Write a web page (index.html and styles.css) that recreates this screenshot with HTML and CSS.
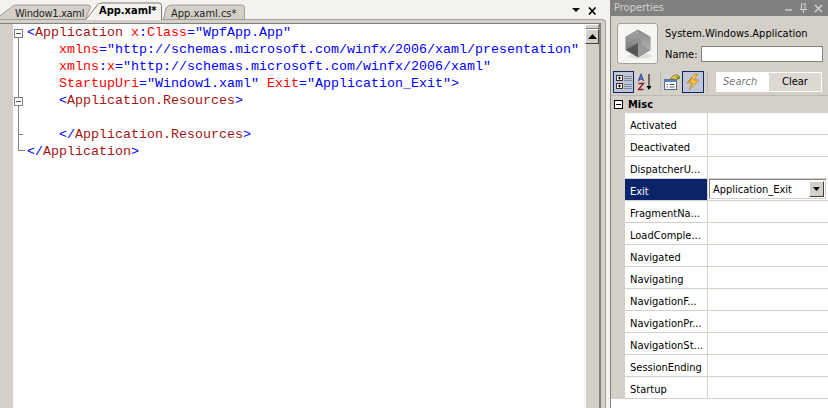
FILE: index.html
```html
<!DOCTYPE html>
<html lang="en">
<head>
<meta charset="utf-8">
<title>App.xaml</title>
<link rel="stylesheet" href="styles.css">
</head>
<body>
<div class="app">
  <section class="doc">
    <div class="tabstrip">
      <div class="tab tab-first">
        <svg class="tab-bg" width="93" height="20" viewBox="0 0 93 20"><path d="M-5 19.500 L13 6 Q14 5 17 5 L88 5 Q90.500 5 90.500 7.500 L85 19.500 Z" fill="#d4d0c8" stroke="#9d9d9a"/></svg>
        <span class="tab-label">Window1.xaml</span>
      </div>
      <div class="tab tab-active">
        <svg class="tab-bg" width="78" height="20" viewBox="0 0 78 20"><path d="M0.500 20 L12.500 5 Q14 3 17 3 L74 3 Q76.500 3 76.500 5.500 V20" fill="#f4f2ee" stroke="#807d76"/></svg>
        <span class="tab-label">App.xaml*</span>
      </div>
      <div class="tab tab-last">
        <svg class="tab-bg" width="84" height="20" viewBox="0 0 84 20"><path d="M0.500 19.500 L3 8 Q5 5 9 5 L79 5 Q81.500 5 81.500 7.500 L81.500 19.500 Z" fill="#d4d0c8" stroke="#9d9d9a"/></svg>
        <span class="tab-label">App.xaml.cs*</span>
      </div>
      <div class="tab-tools">
        <svg width="9" height="5" viewBox="0 0 9 5"><path d="M0 0H8L4 4Z" fill="#000"/></svg>
        <svg width="9" height="8" viewBox="0 0 9 8"><path d="M1 0.500 L7.500 7.500 M7.500 0.500 L1 7.500" stroke="#000" stroke-width="1.600" fill="none"/></svg>
      </div>
    </div>
    <div class="editor-frame">
      <div class="editor">
        <div class="gutter"></div>
        <div class="fold">
          <svg width="14" height="150" viewBox="0 0 14 150">
            <path d="M5.500 14V73 M5.500 82V126.500 H12 M5.500 110.500H10" stroke="#808080" fill="none"/>
            <rect x="1.500" y="5.500" width="8" height="8" fill="#fff" stroke="#808080"/>
            <path d="M3 9.500H8" stroke="#555"/>
            <rect x="1.500" y="73.500" width="8" height="8" fill="#fff" stroke="#808080"/>
            <path d="M3 77.500H8" stroke="#555"/>
          </svg>
        </div>
        <pre class="code"><span class="b">&lt;</span><span class="m">Application</span> <span class="r">x</span><span class="b">:</span><span class="r">Class</span><span class="b">="WpfApp.App"</span>
    <span class="r">xmlns</span><span class="b">="http://schemas.microsoft.com/winfx/2006/xaml/presentation"</span>
    <span class="r">xmlns</span><span class="b">:</span><span class="r">x</span><span class="b">="http://schemas.microsoft.com/winfx/2006/xaml"</span>
    <span class="r">StartupUri</span><span class="b">="Window1.xaml"</span> <span class="r">Exit</span><span class="b">="Application_Exit"&gt;</span>
    <span class="b">&lt;</span><span class="m">Application.Resources</span><span class="b">&gt;</span>

    <span class="b">&lt;/</span><span class="m">Application.Resources</span><span class="b">&gt;</span>
<span class="b">&lt;/</span><span class="m">Application</span><span class="b">&gt;</span></pre>
        <div class="scrollbar">
          <div class="split"></div>
          <div class="sb-btn"><svg width="9" height="5" viewBox="0 0 9 5"><path d="M4.500 0L9 5H0Z" fill="#000"/></svg></div>
          <div class="sb-track"></div>
        </div>
      </div>
    </div>
  </section>
  <aside class="props">
    <header class="props-title">
      <span>Properties</span>
      <span class="title-tools">
        <svg width="9" height="9" viewBox="0 0 9 9"><path d="M1 6H8" stroke="#d4d0c8" stroke-width="1.400"/></svg>
        <svg width="9" height="11" viewBox="0 0 9 11"><path d="M2.500 1V6 M6 1V6 M1 6.500H8 M4.500 7V10 M2 1H7" stroke="#d4d0c8" fill="none"/></svg>
        <svg width="9" height="9" viewBox="0 0 9 9"><path d="M1 1L8 8M8 1L1 8" stroke="#d4d0c8" stroke-width="1.500"/></svg>
      </span>
    </header>
    <div class="object">
      <div class="object-icon">
        <svg width="30" height="32" viewBox="0 0 30 32">
          <defs>
            <linearGradient id="cubeTop" x1="0" y1="0" x2="0" y2="1"><stop offset="0" stop-color="#a8a8a8"/><stop offset="1" stop-color="#6a6a6a"/></linearGradient>
            <linearGradient id="cubeSide" x1="0" y1="0" x2="0" y2="1"><stop offset="0" stop-color="#8c8c8c"/><stop offset="1" stop-color="#b0b0b0"/></linearGradient>
          </defs>
          <ellipse cx="17" cy="28" rx="12" ry="2.500" fill="#dedede"/>
          <path d="M15 2L27 9V22L15 29L3 22V9Z" fill="url(#cubeTop)" stroke="#8a8a8a" stroke-linejoin="round"/>
          <path d="M15 2L27 9V22L18 17Z" fill="url(#cubeSide)"/>
          <path d="M3 22L15 15L15 29Z" fill="#555"/>
          <path d="M15 15L27 22L15 29Z" fill="#9a9a9a"/>
        </svg>
      </div>
      <div class="object-info">
        <div class="object-type">System.Windows.Application</div>
        <label class="name-row"><span>Name:</span><input class="name-input" type="text"></label>
      </div>
    </div>
    <div class="toolbar">
      <button class="tool on"><svg width="18" height="18" viewBox="0 0 18 18"><rect x="1.500" y="2.500" width="6" height="5" fill="#fff" stroke="#333"/><path d="M3 5H6M4.500 3.500V6.500" stroke="#000"/><rect x="1.500" y="10.500" width="6" height="5" fill="#fff" stroke="#333"/><path d="M3 13H6M4.500 11.500V14.500" stroke="#000"/><path d="M9 3.500H17M9 5.500H17M9 7.500H17M9 11.500H17M9 13.500H17M9 15.500H17" stroke="#7a8aa0"/></svg></button>
      <button class="tool tool-az"><svg width="18" height="18" viewBox="0 0 18 18"><path d="M1.500 8L4 1.500L6.500 8M2.500 6H5.500" stroke="#2c4fa8" stroke-width="1.300" fill="none"/><path d="M1.500 10.500H6.500L1.500 16.500H6.500" stroke="#8a2030" stroke-width="1.400" fill="none"/><path d="M12 1V14" stroke="#000"/><path d="M9.500 13H14.500L12 17Z" fill="#000"/></svg></button>
      <span class="tool-sep sep-a"></span>
      <button class="tool tool-pages"><svg width="18" height="18" viewBox="0 0 18 18"><rect x="1.500" y="6.500" width="12" height="10" fill="#fff" stroke="#4a6a9a"/><path d="M1.500 6.500H13.500V9H1.500Z" fill="#5a80c0"/><path d="M3.500 11.500H5M6.500 11.500H11.500M3.500 14H5M6.500 14H11.500" stroke="#556"/><path d="M7 6L11 2H15L17 4L14 7L11 6Z" fill="#e0c050" stroke="#8a7020" stroke-width=".7"/><path d="M13 3.500H17V6H14Z" fill="#6a9a30"/></svg></button>
      <button class="tool on tool-events"><svg width="18" height="18" viewBox="0 0 18 18"><path d="M11 1L3 10H8L5 17L15 7H10L14 1Z" fill="#f0c040" stroke="#b08030" stroke-width=".7"/><path d="M8 4L5 9" stroke="#c06030"/></svg></button>
      <span class="tool-sep sep-b"></span>
      <div class="search">
        <span class="search-box">Search</span>
        <span class="search-clear">Clear</span>
      </div>
    </div>
    <div class="category">
      <svg width="11" height="11" viewBox="0 0 11 11"><rect x="1.500" y="1.500" width="8" height="8" fill="#fff" stroke="#000"/><path d="M3 5.500H8" stroke="#000"/></svg>
      <b>Misc</b>
    </div>
    <div class="grid">
      <div class="row"><div class="cell-name">Activated</div><div class="cell-val"></div></div>
      <div class="row"><div class="cell-name">Deactivated</div><div class="cell-val"></div></div>
      <div class="row"><div class="cell-name">DispatcherU...</div><div class="cell-val"></div></div>
      <div class="row selected"><div class="cell-name">Exit</div><div class="cell-val"><div class="combo"><span>Application_Exit</span><span class="combo-btn"><svg width="7" height="4" viewBox="0 0 7 4"><path d="M0 0H7L3.500 4Z" fill="#000"/></svg></span></div></div></div>
      <div class="row"><div class="cell-name">FragmentNa...</div><div class="cell-val"></div></div>
      <div class="row"><div class="cell-name">LoadComple...</div><div class="cell-val"></div></div>
      <div class="row"><div class="cell-name">Navigated</div><div class="cell-val"></div></div>
      <div class="row"><div class="cell-name">Navigating</div><div class="cell-val"></div></div>
      <div class="row"><div class="cell-name">NavigationF...</div><div class="cell-val"></div></div>
      <div class="row"><div class="cell-name">NavigationPr...</div><div class="cell-val"></div></div>
      <div class="row"><div class="cell-name">NavigationSt...</div><div class="cell-val"></div></div>
      <div class="row"><div class="cell-name">SessionEnding</div><div class="cell-val"></div></div>
      <div class="row"><div class="cell-name">Startup</div><div class="cell-val"></div></div>
    </div>
  </aside>
</div>
</body>
</html>
```
FILE: styles.css
```css
* { box-sizing: border-box; }
html, body { margin: 0; padding: 0; }
body {
  width: 828px;
  height: 408px;
  overflow: hidden;
  background: #d4d0c8;
  font-family: "DejaVu Sans Condensed", "DejaVu Sans", "Liberation Sans", sans-serif;
  font-stretch: condensed;
  font-size: 11px;
  color: #000;
}
.app { display: flex; width: 828px; height: 408px; }

/* document well */
.doc {
  width: 610px;
  flex: none;
  display: flex;
  flex-direction: column;
  background: #f4f2ee;
}
.tabstrip { height: 19px; flex: none; display: flex; align-items: flex-end; position: relative; }
.tab { position: relative; height: 20px; margin-bottom: -1px; flex: none; }
.tab-bg { position: absolute; left: 0; top: 0; }
.tab-label { position: absolute; white-space: nowrap; font-size: 11px; line-height: 16px; color: #222; }
.tab-first { width: 85px; }
.tab-first .tab-label { left: 15px; top: 6px; letter-spacing: -0.3px; }
.tab-active { width: 78px; z-index: 2; }
.tab-active .tab-label { left: 14px; top: 3px; font-weight: 700; color: #000; }
.tab-last { width: 84px; }
.tab-last .tab-label { left: 8px; top: 6px; }
.tab-tools {
  margin-left: auto;
  margin-right: 13px;
  align-self: center;
  display: flex;
  align-items: center;
  gap: 7px;
  padding-top: 2px;
}
.editor-frame {
  flex: 1;
  min-height: 0;
  margin-right: 4px;
  background: #d4d0c8;
  border-top: 1px solid #a5a29b;
  border-right: 1px solid #a5a29b;
  border-top-right-radius: 4px;
  padding-right: 4px;
  padding-top: 3px;
}
.editor {
  height: 100%;
  display: flex;
  background: #fff;
  border-top: 1px solid #808080;
  border-right: 2px solid #808080;
}
.gutter { width: 13px; flex: none; background: #d4d0c8; }
.fold { width: 14px; flex: none; }
.fold svg { display: block; }
.code {
  flex: 1;
  margin: 0;
  font-family: "Liberation Mono", monospace;
  font-size: 13.33px;
  line-height: 17px;
  white-space: pre;
  overflow: hidden;
}
.b { color: #0000ff; }
.m { color: #a31515; }
.r { color: #ff0000; }
.scrollbar { width: 15px; flex: none; display: flex; flex-direction: column; background: #d4d0c8; border-left: 1px solid #f4f2ee; }
.split { height: 5px; border: 1px solid #808080; border-top-color: #fff; border-left-color: #fff; }
.sb-btn { height: 15px; display: flex; align-items: center; justify-content: center; background: #d4d0c8; border: 1px solid; border-color: #fff #404040 #404040 #fff; }
.sb-track { flex: 1; border-left: 1px solid #fff; }

/* properties */
.props {
  width: 218px;
  flex: none;
  display: flex;
  flex-direction: column;
  background: #d4d0c8;
  border-left: 1px solid #808080;
}
.props-title {
  height: 16px;
  flex: none;
  background: #808080;
  color: #d4d0c8;
  font-size: 11px;
  line-height: 16px;
  padding: 0 5px 0 3px;
  display: flex;
  justify-content: space-between;
  align-items: center;
}
.title-tools { display: flex; align-items: center; gap: 6px; }
.object { height: 54px; flex: none; display: flex; padding: 7px 5px 0 6px; gap: 7px; }
.object-icon {
  width: 41px;
  height: 41px;
  flex: none;
  background: #f6f5f2;
  border: 1px solid #a5a29b;
  border-radius: 3px;
  display: flex;
  align-items: center;
  justify-content: center;
}
.object-info { flex: 1; }
.object-type { line-height: 16px; margin-top: 3px; white-space: nowrap; }
.name-row { display: flex; align-items: center; justify-content: space-between; margin-top: 4px; }
.name-input { width: 122px; height: 16px; padding: 0; border: 1px solid #808080; background: #fff; }
.toolbar { height: 26px; flex: none; display: flex; align-items: center; padding-left: 2px; padding-bottom: 2px; border-bottom: 1px solid #bdb9b0; }
.tool {
  width: 21px;
  height: 22px;
  flex: none;
  padding: 0;
  margin: 0;
  background: transparent;
  border: 1px solid transparent;
  display: flex;
  align-items: center;
  justify-content: center;
}
.tool.on { border-color: #0a246a; background: #c2c6d4; }
.tool-az { margin-left: 1px; }
.tool-pages { width: 20px; }
.tool-events { width: 22px; }
.tool-sep { width: 1px; height: 20px; flex: none; background: #bdb9b0; }
.sep-a { margin: 0 1px 0 4px; }
.sep-b { margin: 0 8px 0 3px; }
.search { display: flex; width: 106px; height: 20px; flex: none; background: #fff; align-items: center; padding: 1px; }
.search-box { width: 52px; padding-left: 6px; font-style: italic; color: #777; line-height: 18px; }
.search-clear { flex: 1; height: 18px; background: #ddd9d2; text-align: center; line-height: 18px; }
.category {
  height: 17px;
  flex: none;
  display: flex;
  align-items: center;
  gap: 4px;
  padding-left: 2px;
}
.grid { flex: 1; padding-left: 14px; background: linear-gradient(#d4d0c8, #d4d0c8) left top / 14px 286px no-repeat, #fff; }
.row { height: 22px; display: flex; border-bottom: 1px solid #d4d0c8; }
.cell-name {
  width: 83px;
  flex: none;
  padding: 4px 0 0 5px;
  border-right: 1px solid #d4d0c8;
  background: #fff;
  line-height: 17px;
  white-space: nowrap;
}
.cell-val { flex: 1; background: #fff; }
.selected .cell-name { background: #0a246a; color: #fff; }
.selected .cell-val { padding: 0 2px 0 1px; }
.combo {
  height: 20px;
  background: #fff;
  border: 1px solid;
  border-color: #808080 #d4d0c8 #d4d0c8 #808080;
  display: flex;
  align-items: center;
  justify-content: space-between;
  padding-left: 3px;
}
.combo-btn {
  width: 15px;
  height: 16px;
  margin-right: 1px;
  background: #d4d0c8;
  border: 1px solid;
  border-color: #fff #404040 #404040 #fff;
  display: flex;
  align-items: center;
  justify-content: center;
}
```
